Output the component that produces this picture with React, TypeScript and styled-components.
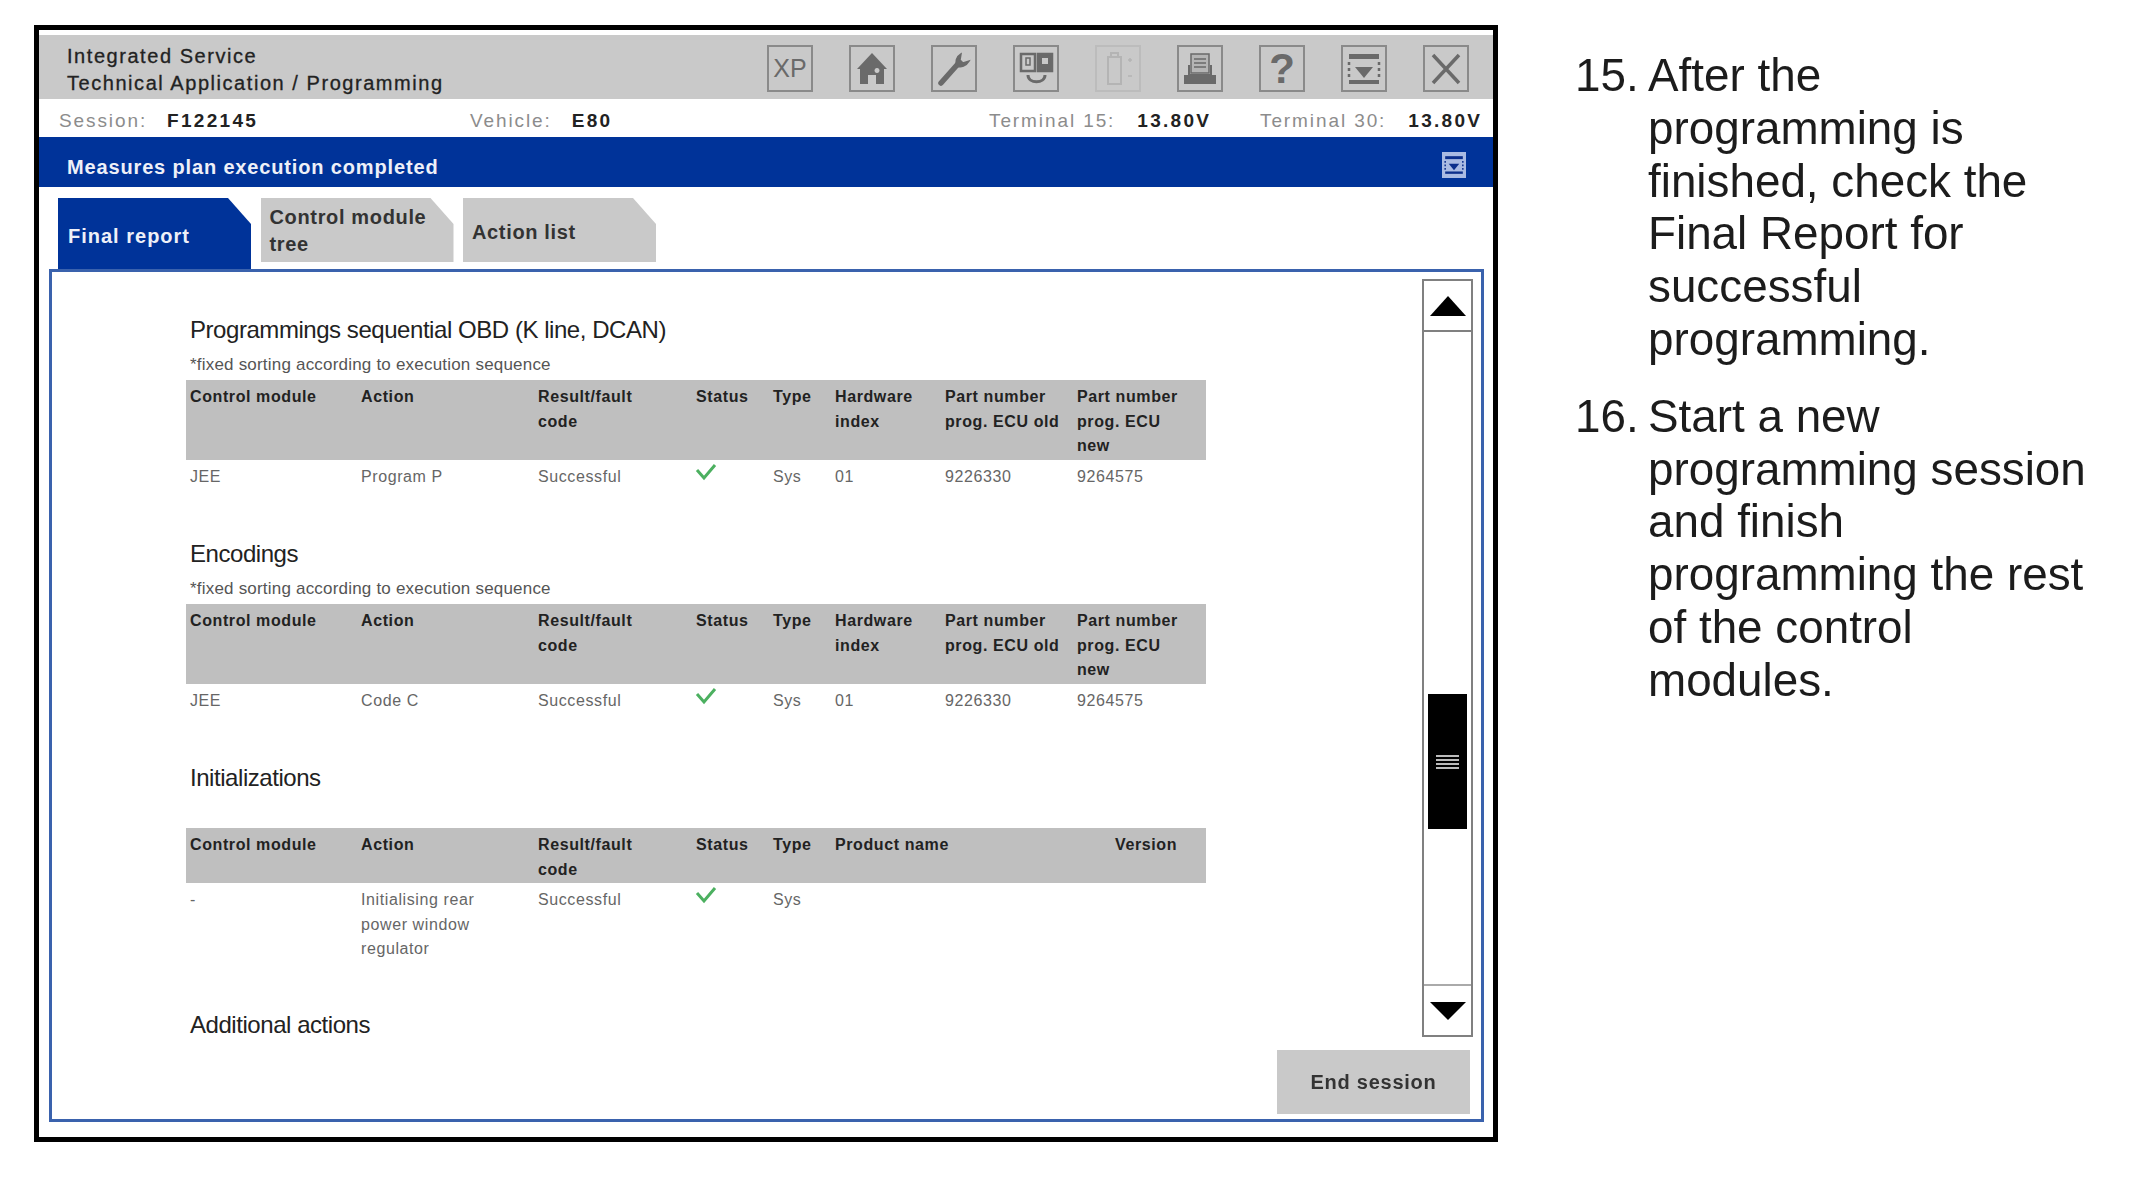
import React, { FC } from 'react';
import styled, { createGlobalStyle } from 'styled-components';

const GlobalStyle = createGlobalStyle`
  html, body {
    margin: 0;
    padding: 0;
    background: #fff;
    font-family: "Liberation Sans", Arial, sans-serif;
  }
`;

const Page = styled.div`
  width: 2133px;
  height: 1185px;
  display: flex;
  align-items: flex-start;
  padding: 25px 0 0 34px;
  box-sizing: border-box;
  overflow: hidden;
  filter: blur(0.6px);
`;

const Frame = styled.div`
  width: 1464px;
  height: 1117px;
  flex: none;
  box-sizing: border-box;
  border: 5px solid #000;
  padding-top: 5px;
  display: flex;
  flex-direction: column;
  background: #fff;
`;

const TitleBar = styled.div`
  height: 64px;
  flex: none;
  background: #c9c9c9;
  display: flex;
  align-items: center;
  justify-content: space-between;
  padding: 0 24px 0 28px;
`;

const AppTitle = styled.div`
  font-size: 20px;
  line-height: 27px;
  color: #222;
  letter-spacing: 1.55px;
  -webkit-text-stroke: 0.3px #222;
  margin-top: 5px;
`;

const Toolbar = styled.div`
  display: flex;
  gap: 36px;
  margin-top: 3px;
`;

const ToolButton = styled.div<{ $disabled?: boolean }>`
  width: 46px;
  height: 47px;
  box-sizing: border-box;
  border: 2px solid ${(p) => (p.$disabled ? '#bcbcbc' : '#8a8a8a')};
  display: flex;
  align-items: center;
  justify-content: center;
  color: #6a6a6a;
  font-size: 25px;
  svg {
    display: block;
  }
`;

const HelpMark = styled.span`
  font-size: 42px;
  font-weight: 700;
  color: #6a6a6a;
  line-height: 1;
`;

const StatusRow = styled.div`
  height: 38px;
  box-sizing: border-box;
  padding: 5px 5px 0 20px;
  flex: none;
  display: grid;
  grid-template-columns: 411px 519px 271px 1fr;
  align-items: center;
`;

const StatusGroup = styled.div<{ $gap: number }>`
  display: flex;
  gap: ${(p) => p.$gap}px;
  font-size: 19px;
  letter-spacing: 1.9px;
  white-space: nowrap;
`;

const StatusLabel = styled.span`
  color: #8c8c8c;
`;

const StatusValue = styled.span`
  font-weight: 700;
  color: #222;
  letter-spacing: 2.3px;
`;

const BlueBar = styled.div`
  height: 50px;
  flex: none;
  background: #003399;
  display: flex;
  align-items: center;
  justify-content: space-between;
  padding: 10px 27px 0 28px;
  box-sizing: border-box;
`;

const BlueTitle = styled.div`
  color: #eef0f8;
  font-size: 20px;
  font-weight: 700;
  letter-spacing: 0.85px;
`;

const SmallCollapse = styled.div`
  width: 24px;
  height: 26px;
  margin-top: -5px;
  box-sizing: border-box;
  background: #a9bbe3;
  display: flex;
  align-items: center;
  justify-content: center;
`;

const TabRow = styled.div`
  display: flex;
  align-items: flex-start;
  gap: 9.5px;
  padding: 11px 0 0 19px;
  height: 82px;
  box-sizing: border-box;
  flex: none;
`;

const Tab = styled.div<{ $active?: boolean; $top: number }>`
  width: 193px;
  height: ${(p) => (p.$active ? 71 : 64)}px;
  box-sizing: border-box;
  padding: ${(p) => p.$top}px 0 0 ${(p) => (p.$active ? 10 : 9)}px;
  background: ${(p) => (p.$active ? '#003399' : '#c9c9c9')};
  color: ${(p) => (p.$active ? '#eef0f8' : '#333')};
  clip-path: polygon(0 0, 170px 0, 100% 26px, 100% 100%, 0 100%);
  font-size: 20px;
  font-weight: 700;
  line-height: 27px;
  letter-spacing: ${(p) => (p.$active ? 1 : 0.65)}px;
`;

const Panel = styled.div`
  margin: 0 9px 0 10px;
  height: 853px;
  box-sizing: border-box;
  border: 3px solid #3a62ad;
  display: flex;
  flex-direction: column;
`;

const PanelBody = styled.div`
  flex: 1;
  display: flex;
  justify-content: space-between;
  min-height: 0;
  padding: 7px 8px 0 134px;
`;

const Report = styled.div`
  width: 1020px;
  display: flex;
  flex-direction: column;
`;

const SectionTitle = styled.div<{ $top: number }>`
  margin-top: ${(p) => p.$top}px;
  padding-left: 4px;
  font-size: 24px;
  line-height: 30px;
  color: #222;
  letter-spacing: -0.45px;
`;

const Note = styled.div`
  height: 30px;
  margin-top: 5px;
  padding-left: 4px;
  font-size: 17px;
  line-height: 29px;
  color: #555;
  letter-spacing: 0.2px;
`;

const Spacer = styled.div`
  height: 35px;
`;

const TableRow = styled.div<{ $cols: string; $head?: boolean }>`
  display: grid;
  grid-template-columns: ${(p) => p.$cols};
  background: ${(p) => (p.$head ? '#bfbfbf' : 'transparent')};
  padding: ${(p) => (p.$head ? '5px 0 1px 4px' : '5px 0 0 4px')};
  color: ${(p) => (p.$head ? '#222' : '#666')};
  font-size: 16px;
  font-weight: ${(p) => (p.$head ? 700 : 400)};
  line-height: 24.5px;
  letter-spacing: 0.6px;
`;

const CheckCell = styled.div`
  margin: -2px 0 0 -1px;
  color: #4cb060;
`;

const ScrollBar = styled.div`
  width: 51px;
  height: 758px;
  box-sizing: border-box;
  border: 2px solid #808080;
  display: flex;
  flex-direction: column;
`;

const ScrollStep = styled.div`
  height: 49px;
  flex: none;
  display: flex;
  align-items: center;
  justify-content: center;
`;

const ScrollTrack = styled.div`
  flex: 1;
  border-top: 2px solid #808080;
  border-bottom: 2px solid #aaa;
  padding-top: 362px;
  display: flex;
  justify-content: center;
`;

const ScrollThumb = styled.div`
  width: 39px;
  height: 135px;
  background: #000;
  display: flex;
  flex-direction: column;
  justify-content: center;
  align-items: center;
  gap: 2px;
`;

const Grip = styled.div`
  width: 23px;
  height: 2px;
  background: #bbb;
`;

const PanelFooter = styled.div`
  display: flex;
  justify-content: flex-end;
  padding: 0 11px 5px 0;
  flex: none;
`;

const EndButton = styled.div`
  width: 193px;
  height: 64px;
  background: #c9c9c9;
  color: #333;
  font-size: 20px;
  font-weight: 700;
  letter-spacing: 0.75px;
  padding-bottom: 0;
  display: flex;
  align-items: center;
  justify-content: center;
`;

const Steps = styled.ol`
  list-style: none;
  margin: 25px 0 0 77px;
  padding: 0;
  flex: none;
  width: 558px;
  display: flex;
  flex-direction: column;
  gap: 24px;
  color: #1c1c1c;
  font-size: 45.8px;
  line-height: 52.8px;
  white-space: nowrap;
`;

const Step = styled.li`
  display: grid;
  grid-template-columns: 73px 1fr;
`;

const Check: FC = () => (
  <svg width="22" height="18" viewBox="0 0 22 18">
    <path d="M2 7 L9 15 L20 2" fill="none" stroke="currentColor" strokeWidth="3" />
  </svg>
);

const COLS = '171px 177px 158px 77px 62px 110px 132px 1fr';
const INIT_COLS = '171px 177px 158px 77px 62px 280px 1fr';

const partHeader = [
  'Control module',
  'Action',
  <>Result/fault<br />code</>,
  'Status',
  'Type',
  <>Hardware<br />index</>,
  <>Part number<br />prog. ECU old</>,
  <>Part number<br />prog. ECU<br />new</>,
];

interface SectionProps {
  title: string;
  top: number;
  action: string;
}

const PartSection: FC<SectionProps> = ({ title, top, action }: SectionProps) => (
  <>
    <SectionTitle $top={top}>{title}</SectionTitle>
    <Note>*fixed sorting according to execution sequence</Note>
    <TableRow $cols={COLS} $head>
      {partHeader.map((h, i) => (
        <div key={i}>{h}</div>
      ))}
    </TableRow>
    <TableRow $cols={COLS}>
      <div>JEE</div>
      <div>{action}</div>
      <div>Successful</div>
      <CheckCell>
        <Check />
      </CheckCell>
      <div>Sys</div>
      <div>01</div>
      <div>9226330</div>
      <div>9264575</div>
    </TableRow>
  </>
);

const CollapseGlyph: FC<{ size: number; color: string }> = ({ size, color }) => (
  <svg width={size} height={size} viewBox="0 0 34 34" fill={color}>
    <rect x="2" y="2" width="30" height="5" />
    <rect x="2" y="28" width="30" height="4" />
    <path d="M8 15 H26 L17 26 Z" />
    <path d="M2 10 V27 M32 10 V27" stroke={color} strokeWidth="2.5" strokeDasharray="3 3" fill="none" />
  </svg>
);

const toolIcons = [
  <span key="xp">XP</span>,
  <svg key="home" width="36" height="38" viewBox="0 0 36 38" fill="currentColor">
    <path fillRule="evenodd" d="M18 3 L33 19 H30 V34 H22 V25 H14 V34 H6 V19 H3 Z M23 18 a2.5 2.5 0 1 0 0.01 0 Z" />
  </svg>,
  <svg key="wrench" width="36" height="38" viewBox="0 0 36 38" fill="none" stroke="currentColor">
    <path d="M5 33 L21 15" strokeWidth="5.5" strokeLinecap="round" />
    <path d="M25 4 C20 7 19 12 21 16 C25 18 30 16 33 11 L27 13 L24 10 Z" fill="currentColor" strokeWidth="1.5" />
  </svg>,
  <svg key="module" width="38" height="38" viewBox="0 0 38 38" fill="none" stroke="currentColor">
    <rect x="4" y="4" width="14" height="17" strokeWidth="2.5" />
    <rect x="21" y="4" width="14" height="17" strokeWidth="2.5" fill="currentColor" />
    <rect x="25" y="8" width="6" height="6" fill="#c9c9c9" stroke="none" />
    <rect x="9" y="8" width="4" height="7" strokeWidth="1.5" />
    <path d="M11 25 C11 34 28 34 28 25" strokeWidth="3" />
  </svg>,
  <svg key="battery" width="36" height="38" viewBox="0 0 36 38" fill="none" stroke="#b4b4b4">
    <rect x="8" y="7" width="13" height="27" strokeWidth="2" />
    <rect x="11" y="3" width="7" height="4" strokeWidth="2" />
    <path d="M28 10 H32 M30 8 V12 M28 26 H32" strokeWidth="1.5" />
  </svg>,
  <svg key="printer" width="38" height="36" viewBox="0 0 38 36" fill="currentColor">
    <rect x="10" y="3" width="18" height="19" fill="#b5b5b5" stroke="currentColor" strokeWidth="1.5" />
    <path d="M13 8 H25 M13 12 H25 M13 16 H25" stroke="currentColor" strokeWidth="1.5" />
    <path d="M7 14 H9 V23 H29 V14 H31 V24 H35 V33 H3 V24 H7 Z" />
  </svg>,
  <HelpMark key="help">?</HelpMark>,
  <CollapseGlyph key="collapse" size={34} color="#6a6a6a" />,
  <svg key="close" width="36" height="36" viewBox="0 0 36 36" stroke="currentColor" strokeWidth="3.5">
    <path d="M5 4 L31 32 M31 4 L5 32" />
  </svg>,
];

const App: FC = () => {
  return (
    <Page>
      <GlobalStyle />
      <Frame>
        <TitleBar>
          <AppTitle>
            Integrated Service
            <br />
            Technical Application / Programming
          </AppTitle>
          <Toolbar>
            {toolIcons.map((icon, i) => (
              <ToolButton key={i} $disabled={i === 4}>
                {icon}
              </ToolButton>
            ))}
          </Toolbar>
        </TitleBar>
        <StatusRow>
          <StatusGroup $gap={20}>
            <StatusLabel>Session:</StatusLabel>
            <StatusValue>F122145</StatusValue>
          </StatusGroup>
          <StatusGroup $gap={20}>
            <StatusLabel>Vehicle:</StatusLabel>
            <StatusValue>E80</StatusValue>
          </StatusGroup>
          <StatusGroup $gap={22}>
            <StatusLabel>Terminal 15:</StatusLabel>
            <StatusValue>13.80V</StatusValue>
          </StatusGroup>
          <StatusGroup $gap={22}>
            <StatusLabel>Terminal 30:</StatusLabel>
            <StatusValue>13.80V</StatusValue>
          </StatusGroup>
        </StatusRow>
        <BlueBar>
          <BlueTitle>Measures plan execution completed</BlueTitle>
          <SmallCollapse>
            <CollapseGlyph size={20} color="#0b2f8c" />
          </SmallCollapse>
        </BlueBar>
        <TabRow>
          <Tab $active $top={25}>Final report</Tab>
          <Tab $top={6}>
            Control module
            <br />
            tree
          </Tab>
          <Tab $top={21}>Action list</Tab>
        </TabRow>
        <Panel>
          <PanelBody>
            <Report>
              <PartSection title="Programmings sequential OBD (K line, DCAN)" top={36} action="Program P" />
              <PartSection title="Encodings" top={50} action="Code C" />
              <SectionTitle $top={50}>Initializations</SectionTitle>
              <Spacer />
              <TableRow $cols={INIT_COLS} $head>
                <div>Control module</div>
                <div>Action</div>
                <div>
                  Result/fault
                  <br />
                  code
                </div>
                <div>Status</div>
                <div>Type</div>
                <div>Product name</div>
                <div>Version</div>
              </TableRow>
              <TableRow $cols={INIT_COLS}>
                <div>-</div>
                <div>
                  Initialising rear
                  <br />
                  power window
                  <br />
                  regulator
                </div>
                <div>Successful</div>
                <CheckCell>
                  <Check />
                </CheckCell>
                <div>Sys</div>
              </TableRow>
              <SectionTitle $top={48}>Additional actions</SectionTitle>
            </Report>
            <ScrollBar>
              <ScrollStep>
                <svg width="38" height="22" viewBox="0 0 38 22">
                  <path d="M19 1 L37 21 H1 Z" fill="#000" />
                </svg>
              </ScrollStep>
              <ScrollTrack>
                <ScrollThumb>
                  <Grip />
                  <Grip />
                  <Grip />
                  <Grip />
                </ScrollThumb>
              </ScrollTrack>
              <ScrollStep>
                <svg width="38" height="20" viewBox="0 0 38 20">
                  <path d="M1 1 H37 L19 19 Z" fill="#000" />
                </svg>
              </ScrollStep>
            </ScrollBar>
          </PanelBody>
          <PanelFooter>
            <EndButton>End session</EndButton>
          </PanelFooter>
        </Panel>
      </Frame>
      <Steps>
        <Step>
          <span>15.</span>
          <span>
            After the
            <br />
            programming is
            <br />
            finished, check the
            <br />
            Final Report for
            <br />
            successful
            <br />
            programming.
          </span>
        </Step>
        <Step>
          <span>16.</span>
          <span>
            Start a new
            <br />
            programming session
            <br />
            and finish
            <br />
            programming the rest
            <br />
            of the control
            <br />
            modules.
          </span>
        </Step>
      </Steps>
    </Page>
  );
};

export default App;
